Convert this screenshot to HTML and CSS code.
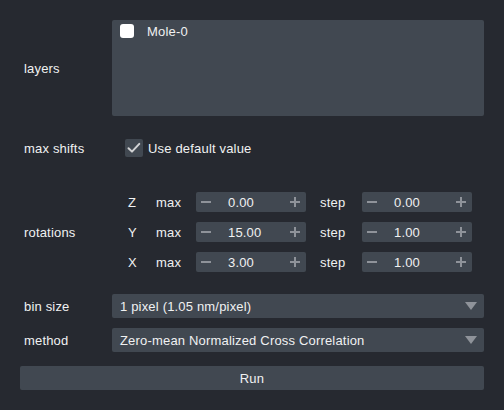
FILE: index.html
```html
<!DOCTYPE html>
<html>
<head>
<meta charset="utf-8">
<link rel="stylesheet" href="styles.css">
</head>
<body>
<div class="panel">
  <div class="row row-layers">
    <div class="label">layers</div>
    <div class="list">
      <div class="list-item">
        <span class="list-check"></span>
        <span class="list-text">Mole-0</span>
      </div>
    </div>
  </div>

  <div class="row row-shifts">
    <div class="label">max shifts</div>
    <div class="check-field">
      <span class="checkbox">
        <svg width="18" height="18" viewBox="0 0 18 18"><path d="M3.5 9.2 L7 12.6 L14.3 4.9" fill="none" stroke="#d1d2d4" stroke-width="2" stroke-linecap="round" stroke-linejoin="round"/></svg>
      </span>
      <span class="check-text">Use default value</span>
    </div>
  </div>

  <div class="row row-rot">
    <div class="label">rotations</div>
    <div class="rot-grid">
      <span class="axis">Z</span><span class="sub">max</span>
      <div class="spin"><span class="spin-btn minus"></span><span class="spin-val">0.00</span><span class="spin-btn plus"></span></div>
      <span class="sub step">step</span>
      <div class="spin"><span class="spin-btn minus"></span><span class="spin-val">0.00</span><span class="spin-btn plus"></span></div>

      <span class="axis">Y</span><span class="sub">max</span>
      <div class="spin"><span class="spin-btn minus"></span><span class="spin-val">15.00</span><span class="spin-btn plus"></span></div>
      <span class="sub step">step</span>
      <div class="spin"><span class="spin-btn minus"></span><span class="spin-val">1.00</span><span class="spin-btn plus"></span></div>

      <span class="axis">X</span><span class="sub">max</span>
      <div class="spin"><span class="spin-btn minus"></span><span class="spin-val">3.00</span><span class="spin-btn plus"></span></div>
      <span class="sub step">step</span>
      <div class="spin"><span class="spin-btn minus"></span><span class="spin-val">1.00</span><span class="spin-btn plus"></span></div>
    </div>
  </div>

  <div class="row row-bin">
    <div class="label">bin size</div>
    <div class="combo"><span>1 pixel (1.05 nm/pixel)</span><span class="arrow"></span></div>
  </div>

  <div class="row row-method">
    <div class="label">method</div>
    <div class="combo"><span>Zero-mean Normalized Cross Correlation</span><span class="arrow"></span></div>
  </div>

  <button class="run">Run</button>
</div>
</body>
</html>
```

FILE: styles.css
```css
html, body {
  margin: 0;
  padding: 0;
  background: #262930;
}
body {
  font-family: "Liberation Sans", Arial, sans-serif;
  font-size: 13px;
  letter-spacing: 0.18px;
  color: #f0f1f2;
  width: 504px;
  height: 410px;
  overflow: hidden;
}
.panel {
  padding: 20px 20px 0 20px;
  display: flex;
  flex-direction: column;
}
.row {
  display: grid;
  grid-template-columns: 92px 1fr;
  align-items: center;
}
.label {
  padding-left: 4px;
  line-height: 15px;
}
.row-layers { height: 96px; }
.row-shifts { margin-top: 20px; height: 24px; }
.row-rot { margin-top: 32px; }
.row-bin { margin-top: 22px; height: 24px; }
.row-method { margin-top: 10px; height: 24px; }

.list {
  height: 96px;
  background: #414851;
  border-radius: 2px;
  align-self: stretch;
}
.list-item {
  display: flex;
  align-items: center;
  height: 22px;
  padding: 0 0 0 8px;
}
.list-check {
  width: 14px;
  height: 14px;
  background: #ffffff;
  border-radius: 3px;
}
.list-text {
  margin-left: 13px;
}

.check-field {
  display: flex;
  align-items: center;
  padding-left: 13px;
}
.checkbox {
  width: 18px;
  height: 18px;
  background: #414851;
  border-radius: 2px;
  display: block;
}
.checkbox svg { display: block; }
.check-text { margin-left: 5px; }

.rot-grid {
  display: grid;
  grid-template-columns: 28px 40px 110px 56px 110px;
  grid-auto-rows: 20px;
  row-gap: 10px;
  padding-left: 16px;
  align-items: center;
}
.axis, .sub { line-height: 15px; }
.step { padding-left: 14px; }
.spin {
  height: 20px;
  background: #414851;
  border-radius: 2px;
  display: flex;
  align-items: center;
}
.spin-btn {
  width: 22px;
  height: 20px;
  position: relative;
  flex: none;
}
.spin-btn::before, .spin-btn::after {
  content: "";
  position: absolute;
  background: #8f939a;
}
.minus::before {
  left: 5px;
  top: 9px;
  width: 10px;
  height: 2px;
}
.minus::after { display: none; }
.plus { margin-left: auto; }
.plus::before {
  left: 6px;
  top: 9px;
  width: 10px;
  height: 2px;
}
.plus::after {
  left: 10px;
  top: 5px;
  width: 2px;
  height: 10px;
}
.spin-val {
  padding-left: 10px;
  line-height: 15px;
}

.combo {
  height: 24px;
  background: #414851;
  border-radius: 2px;
  display: flex;
  align-items: center;
  justify-content: space-between;
  padding: 0 7px 0 8px;
}
.arrow {
  width: 0;
  height: 0;
  border-left: 6px solid transparent;
  border-right: 6px solid transparent;
  border-top: 8px solid #8f939a;
}

.run {
  margin-top: 14px;
  height: 24px;
  background: #414851;
  border: none;
  border-radius: 2px;
  color: #f0f1f2;
  font-family: "Liberation Sans", Arial, sans-serif;
  font-size: 13px;
  letter-spacing: 0.18px;
  padding: 0;
}
```
